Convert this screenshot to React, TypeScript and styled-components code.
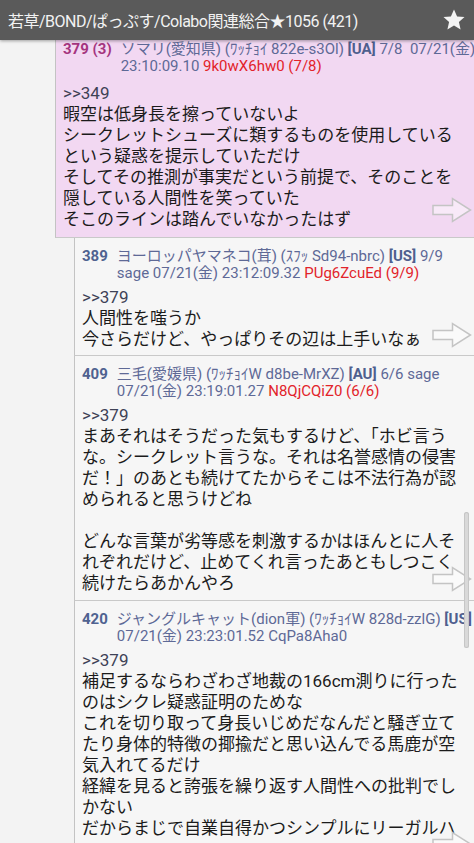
import React from 'react';
import styled, { createGlobalStyle } from 'styled-components';

const GlobalStyle = createGlobalStyle`
  html, body {
    margin: 0;
    padding: 0;
    background: #f3f3f3;
  }
  body {
    font-family: Roboto, "Noto Sans CJK JP", sans-serif;
  }
`;

const Screen = styled.div`
  position: relative;
  width: 474px;
  height: 843px;
  overflow: hidden;
  background: #f3f3f3;
`;

const Header = styled.header`
  position: relative;
  z-index: 2;
  height: 40px;
  padding: 0 8px;
  display: flex;
  align-items: center;
  justify-content: space-between;
  background: #5a5a5a;
  box-shadow: 0 1px 3px rgba(0, 0, 0, 0.35);
`;

const Title = styled.h1`
  margin: 0;
  font-family: Roboto, "Noto Sans CJK JP", sans-serif;
  font-size: 16px;
  letter-spacing: -0.5px;
  font-weight: 400;
  color: #f2f2f2;
  white-space: nowrap;
`;

const Thread = styled.main`
  display: flex;
  flex-direction: column;
`;

const Post = styled.article<{ $indent: number; $pink?: boolean; $padTop: number; $padBottom: number }>`
  position: relative;
  margin-left: ${p => p.$indent}px;
  padding: ${p => p.$padTop}px 10px ${p => p.$padBottom}px 7px;
  background: ${p => (p.$pink ? '#f2d8f2' : '#f6f6f6')};
  border-left: 1px solid #c3c3c3;
  border-bottom: 1px solid #c9c9c9;
`;

const Meta = styled.div`
  display: flex;
  font-size: 15px;
  line-height: 17px;
  color: #5e6996;
`;

const Num = styled.span<{ $color: string }>`
  margin-right: 9px;
  font-weight: 700;
  color: ${p => p.$color};
  white-space: nowrap;
`;

const MetaText = styled.div`
  white-space: nowrap;
`;

const Tag = styled.b`
  font-weight: 700;
  color: #4f5f8e;
`;

const Id = styled.span`
  color: #e2232a;
`;

const Body = styled.div<{ $gap: number }>`
  margin-top: ${p => p.$gap}px;
  font-size: 17px;
  line-height: 21px;
  color: #1b1b1b;
  white-space: pre;
`;

const Anchor = styled.span`
  color: #3e4256;
`;

const ArrowBox = styled.div<{ $bottom: number }>`
  position: absolute;
  right: 2px;
  bottom: ${p => p.$bottom}px;
  width: 40px;
  height: 26px;
`;

const Scrollbar = styled.div`
  position: absolute;
  right: 5px;
  top: 512px;
  width: 5px;
  height: 136px;
  border-radius: 3px;
  background: #d9d9d9;
  box-shadow: inset 0 0 0 1px #c6c6c6;
`;

const Star = () => (
  <svg width="24" height="24" viewBox="0 0 24 24">
    <path
      d="M12 1.5l3.1 7 7.4.6-5.6 4.9 1.7 7.4L12 17.5l-6.6 3.9 1.7-7.4L1.5 9.1l7.4-.6z"
      fill="#f4f4f4"
    />
  </svg>
);

const Arrow = ({ bottom }: { bottom: number }) => (
  <ArrowBox $bottom={bottom}>
    <svg width="40" height="26" viewBox="0 0 40 26">
      <path
        d="M1 8.5H20.5V1.5L38.5 13L20.5 24.5V17.5H1Z"
        fill="rgba(255,255,255,0.45)"
        stroke="#c4c4c4"
        strokeWidth="1.5"
        strokeLinejoin="miter"
      />
    </svg>
  </ArrowBox>
);

type PostData = {
  num: string;
  numColor: string;
  indent: number;
  pink?: boolean;
  padTop: number;
  padBottom: number;
  gap: number;
  arrowBottom: number;
  line1: React.ReactNode;
  line2: React.ReactNode;
  anchor: string;
  body: string;
};

const posts: PostData[] = [
  {
    num: '379 (3)',
    numColor: '#a5357f',
    indent: 55,
    pink: true,
    padTop: 1,
    padBottom: 7,
    gap: 8,
    arrowBottom: 14,
    line1: (
      <>
        ソマリ(愛知県) (ﾜｯﾁｮｲ 822e-s3Ol) <Tag>[UA]</Tag> 7/8&nbsp; 07/21(金)
      </>
    ),
    line2: (
      <>
        23:10:09.10 <Id>9k0wX6hw0 (7/8)</Id>
      </>
    ),
    anchor: '>>349',
    body: [
      '暇空は低身長を擦っていないよ',
      'シークレットシューズに類するものを使用している',
      'という疑惑を提示していただけ',
      'そしてその推測が事実だという前提で、そのことを',
      '隠している人間性を笑っていた',
      'そこのラインは踏んでいなかったはず',
    ].join('\n'),
  },
  {
    num: '389',
    numColor: '#4f6290',
    indent: 74,
    padTop: 10,
    padBottom: 5,
    gap: 5,
    arrowBottom: 7,
    line1: (
      <>
        ヨーロッパヤマネコ(茸) (ｽﾌｯ Sd94-nbrc) <Tag>[US]</Tag> 9/9
      </>
    ),
    line2: (
      <>
        sage 07/21(金) 23:12:09.32 <Id>PUg6ZcuEd (9/9)</Id>
      </>
    ),
    anchor: '>>379',
    body: ['人間性を嗤うか', '今さらだけど、やっぱりその辺は上手いなぁ'].join('\n'),
  },
  {
    num: '409',
    numColor: '#4f6290',
    indent: 74,
    padTop: 10,
    padBottom: 6,
    gap: 5,
    arrowBottom: 8,
    line1: (
      <>
        三毛(愛媛県) (ﾜｯﾁｮｲW d8be-MrXZ) <Tag>[AU]</Tag> 6/6 sage
      </>
    ),
    line2: (
      <>
        07/21(金) 23:19:01.27 <Id>N8QjCQiZ0 (6/6)</Id>
      </>
    ),
    anchor: '>>379',
    body: [
      'まあそれはそうだった気もするけど、「ホビ言う',
      'な。シークレット言うな。それは名誉感情の侵害',
      'だ！」のあとも続けてたからそこは不法行為が認',
      'められると思うけどね',
      '',
      'どんな言葉が劣等感を刺激するかはほんとに人そ',
      'れぞれだけど、止めてくれ言ったあともしつこく',
      '続けたらあかんやろ',
    ].join('\n'),
  },
  {
    num: '420',
    numColor: '#4f6290',
    indent: 74,
    padTop: 10,
    padBottom: 6,
    gap: 5,
    arrowBottom: -12,
    line1: (
      <>
        ジャングルキャット(dion軍) (ﾜｯﾁｮｲW 828d-zzlG) <Tag>[US]</Tag>
      </>
    ),
    line2: <>07/21(金) 23:23:01.52 CqPa8Aha0</>,
    anchor: '>>379',
    body: [
      '補足するならわざわざ地裁の166cm測りに行った',
      'のはシクレ疑惑証明のためな',
      'これを切り取って身長いじめだなんだと騒ぎ立て',
      'たり身体的特徴の揶揄だと思い込んでる馬鹿が空',
      '気入れてるだけ',
      '経緯を見ると誇張を繰り返す人間性への批判でし',
      'かない',
      'だからまじで自業自得かつシンプルにリーガルハ',
    ].join('\n'),
  },
];

export default function App() {
  return (
    <Screen>
      <GlobalStyle />
      <Header>
        <Title>若草/BOND/ぱっぷす/Colabo関連総合★1056 (421)</Title>
        <Star />
      </Header>
      <Thread>
        {posts.map(p => (
          <Post key={p.num} $indent={p.indent} $pink={p.pink} $padTop={p.padTop} $padBottom={p.padBottom}>
            <Meta>
              <Num $color={p.numColor}>{p.num}</Num>
              <MetaText>
                {p.line1}
                <br />
                {p.line2}
              </MetaText>
            </Meta>
            <Body $gap={p.gap}>
              <Anchor>{p.anchor}</Anchor>
              {'\n' + p.body}
            </Body>
            <Arrow bottom={p.arrowBottom} />
          </Post>
        ))}
      </Thread>
      <Scrollbar />
    </Screen>
  );
}
